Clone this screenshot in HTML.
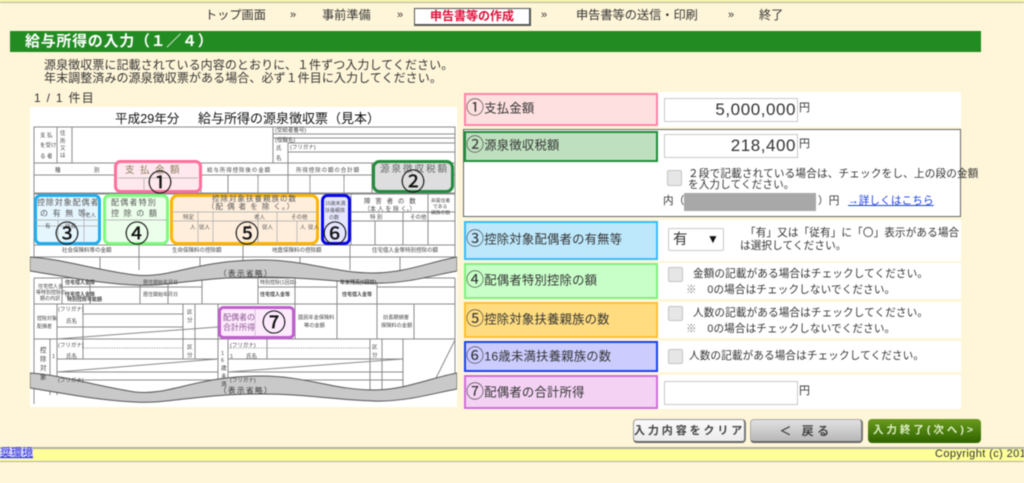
<!DOCTYPE html>
<html lang="ja"><head><meta charset="utf-8"><title>給与所得の入力</title>
<style>
html,body{margin:0;padding:0;width:1024px;height:483px;overflow:hidden;background:#FFF6D9}
#p{position:absolute;left:0;top:0;width:1024px;height:483px;overflow:hidden;filter:blur(.55px);font-family:"Liberation Sans","Noto Sans CJK JP",sans-serif;color:#333}
.a{position:absolute;white-space:nowrap;line-height:1}
.l{position:absolute;left:464px;width:194px;box-sizing:border-box;border:2px solid;}
.w{position:absolute;background:#fff}
.n{position:absolute;left:466px;font-size:12.3px;letter-spacing:.25px;white-space:nowrap;line-height:20px;height:20px}
.n b{font-weight:400;font-size:18px;vertical-align:-1.5px;margin-right:0}
.i{position:absolute;box-sizing:border-box;background:#fff;border:1px solid #c8c8c8;text-align:right;font-size:17px;letter-spacing:.55px;line-height:22px;padding-right:1px;color:#333}
.c{position:absolute;width:15px;height:15px;box-sizing:border-box;background:#e6e6e6;border:1px solid #c4c4c4;border-radius:2px}
.s{font-size:10.6px;letter-spacing:.12px}
.b{position:absolute;top:419px;height:24px;box-sizing:border-box;border-radius:4px;text-align:center;font-size:11px;font-weight:700;line-height:22px;white-space:nowrap}
svg text{font-family:"Liberation Sans","Noto Sans CJK JP",sans-serif}
</style></head><body><div id="p">
<div style="position:absolute;left:0;top:0;width:1024px;height:2px;background:#F4F0A8"></div>
<div style="position:absolute;left:0;top:2px;width:1024px;height:1px;background:#b5b5a5"></div>

<div class="a" style="left:205px;top:9px;font-size:12.2px">トップ画面</div>
<div class="a" style="left:290px;top:10px;font-size:11px">»</div>
<div class="a" style="left:322px;top:9px;font-size:12.2px">事前準備</div>
<div class="a" style="left:397px;top:10px;font-size:11px">»</div>
<div class="a" style="left:414px;top:8px;width:117px;height:18px;box-sizing:border-box;background:#fff;border:1px solid #555;border-width:1px 2px 2px 1px;color:#e0103a;font-size:12px;font-weight:700;text-align:center;line-height:15px">申告書等の作成</div>
<div class="a" style="left:541px;top:10px;font-size:11px">»</div>
<div class="a" style="left:576px;top:9px;font-size:12.2px">申告書等の送信・印刷</div>
<div class="a" style="left:728px;top:10px;font-size:11px">»</div>
<div class="a" style="left:759px;top:9px;font-size:12.2px">終了</div>

<div style="position:absolute;left:10px;top:31px;width:971px;height:21px;background:#228B22"></div>
<div class="a" style="left:25px;top:34px;font-size:15px;font-weight:700;color:#fff;letter-spacing:.7px">給与所得の入力（１／４）</div>

<div class="a" style="left:44px;top:59px;font-size:12px;letter-spacing:.08px">源泉徴収票に記載されている内容のとおりに、１件ずつ入力してください。</div>
<div class="a" style="left:44px;top:72px;font-size:12px;letter-spacing:.08px">年末調整済みの源泉徴収票がある場合、必ず１件目に入力してください。</div>
<div class="a" style="left:34px;top:92px;font-size:12px;letter-spacing:1.300px">1 / 1 件目</div>

<svg style="position:absolute;left:30px;top:107px" width="427" height="300" viewBox="30 107 427 300">
<rect x="30" y="107" width="427" height="300" fill="#fff"/>
<text x="115" y="123" font-size="12.6" fill="#111">平成29年分</text>
<text x="198" y="123" font-size="13" fill="#111">給与所得の源泉徴収票（見本）</text>
<g fill="none" stroke="#8a8a8a" stroke-width="1">
<rect x="34" y="127" width="421" height="36"/>
<path d="M57 127V163M72 127V163M273 127V163M288 143V163M273 134H455M273 138H455M288 143H455M288 152H455"/>
<path d="M34 175H455M34 193H455M34 163V257M455 163V257M201 163V193M228 175V193M258 175V193M288 163V193M310 175V193M344 175V193M372 163V193"/>
<path d="M34 194H455M34 245H455M34 257H455M351 194V245M375 221V245M403 212V245M428 194V245M351 212H455M351 221H455"/>
<path d="M139 245V257M243 245V257M350 245V257M139 257V270M243 257V270M350 257V270M100 257V270M200 257V270M300 257V270M400 257V270"/>
<path d="M34 278H455M62 287H202M258 287H337M377 287H455M34 304H455M34 339H455M34 278V404M455 278V385"/>
<path d="M62 278V304M90 278V304M140 278V304M168 278V304M202 278V304M258 278V304M295 278V304M337 278V304M377 278V304"/>
<path d="M57 304V395M83 304V339M183 304V339M195 304V339M218 304V395M295 304V339M337 304V339M377 304V339M414 304V339"/>
<path d="M57 327H183M57 339L218 327M83 314H183"/>
<path d="M50 339V395M83 339V359M183 339V359M195 339V359M57 359H218M57 372L218 359M57 372H218M57 380H218"/>
<path d="M228 339V395M267 339V359M370 339V395M382 339V395M403 339V400M228 359H403M228 372L403 359M228 372H403M228 380H403M435 380L455 340"/>
</g>
<path d="M84 348H183M228 348H370" stroke="#aaa" stroke-width="1" stroke-dasharray="1.5 1"/>
<path d="M30 257C62 259 95 270 135 275C170 279 195 260 262 260C305 260 335 273 373 273C405 273 430 262 457 257V271C430 276 405 284 373 283C335 282 305 277 262 277C195 277 170 287 135 285C95 283 62 276 30 271Z" fill="#c9c9c9" stroke="#555" stroke-width="1"/>
<path d="M30 373C62 375 95 386 135 392C170 396 195 376 262 376C305 376 335 390 373 390C405 390 430 378 457 373V389C430 394 405 402 373 401C335 400 305 394 262 394C195 394 170 404 135 402C95 400 62 393 30 388Z" fill="#c9c9c9" stroke="#555" stroke-width="1"/>
<text x="219" y="276" font-size="7.5" fill="#333" letter-spacing="1.500">（表示省略）</text>
<text x="219" y="393" font-size="7.5" fill="#333" letter-spacing="1.500">（表示省略）</text>
<g font-size="5.5" fill="#444">
<text x="40" y="137">支 払</text><text x="40" y="147">を受け</text><text x="40" y="158">る 者</text>
<text x="60" y="135">住</text><text x="60" y="143">所</text><text x="60" y="150">又</text><text x="60" y="157">は</text>
<text x="275" y="132">(受給者番号)</text><text x="275" y="142">(役職名)</text><text x="290" y="149">(フリガナ)</text>
<text x="276" y="150">氏</text><text x="276" y="160">名</text>
<text x="55" y="172">種</text><text x="94" y="172">別</text>
<text x="207" y="172" letter-spacing=".9">給与所得控除後の金額</text>
<text x="296" y="172" letter-spacing=".9">所得控除の額の合計額</text>
<text x="62" y="252">社会保険料等の金額</text><text x="172" y="252">生命保険料の控除額</text><text x="272" y="252">地震保険料の控除額</text><text x="372" y="252">住宅借入金等特別控除の額</text>
<text x="364" y="203" font-size="6.5" letter-spacing="1.5">障 害 者 の 数</text>
<text x="364" y="211" font-size="6">（本 人 を 除 く。）</text>
<text x="431" y="202" font-size="4.8">非居住者</text><text x="433" y="208" font-size="4.8">である</text><text x="431" y="214" font-size="4.8">親族の数</text>
<text x="370" y="219">特 別</text><text x="410" y="219">その他</text>
<text x="38" y="288" font-size="5">住宅借入金</text><text x="36" y="294" font-size="5">等特別控除の</text><text x="40" y="300" font-size="5">額の内訳</text>
<text x="65" y="284" font-size="5" font-weight="700">住宅借入金等</text><text x="65" y="296" font-size="5" font-weight="700">住宅借入金等</text><text x="67" y="301" font-size="5" font-weight="700">特別控除可能額</text>
<text x="143" y="284" font-size="5">居住開始年月日</text><text x="143" y="296" font-size="5">居住開始年月日</text>
<text x="260" y="284" font-size="5">特別控除(1回目)</text><text x="260" y="296" font-size="5" font-weight="700">住宅借入金等</text>
<text x="340" y="284" font-size="5" font-weight="700">年末残高(1回目)</text><text x="342" y="296" font-size="5" font-weight="700">住宅借入金等</text>
<text x="37" y="320" font-size="5">控除対象</text><text x="37" y="328" font-size="5">配偶者</text>
<text x="58" y="311">(フリガナ)</text><text x="66" y="323">氏名</text>
<text x="187" y="314">区</text><text x="187" y="322">分</text>
<text x="58" y="347">(フリガナ)</text><text x="66" y="358">氏名</text>
<text x="187" y="349">区</text><text x="187" y="357">分</text>
<text x="230" y="347">(フリガナ)</text><text x="246" y="358">氏名</text>
<text x="372" y="349">区</text><text x="372" y="357">分</text>
<text x="58" y="382">(フリガナ)</text><text x="230" y="382">(フリガナ)</text>
<text x="298" y="319" font-size="5.2">国民年金保険料</text><text x="304" y="327" font-size="5.2">等の金額</text>
<text x="383" y="319" font-size="5.2">旧長期損害</text><text x="381" y="327" font-size="5.2">保険料の金額</text>
<text x="40" y="352" font-size="6.5">控</text><text x="40" y="361" font-size="6.5">除</text><text x="40" y="370" font-size="6.5">対</text><text x="40" y="379" font-size="6.5">象</text>
<text x="221" y="355" font-size="5.5">1</text><text x="221" y="362" font-size="5.5">6</text><text x="221" y="370" font-size="5.5">歳</text><text x="221" y="378" font-size="5.5">未</text><text x="221" y="386" font-size="5.5">満</text>
<text x="52" y="358">1</text><text x="230" y="358">1</text>
</g>
<g stroke-width="3">
<rect x="115.500" y="161.500" width="85" height="30" rx="5" fill="#FFE8EE" stroke="#FF6F9C"/>
<rect x="373.500" y="161.500" width="79" height="30" rx="6" fill="#DEDEDE" stroke="#228B3C"/>
<rect x="35.500" y="195.500" width="64" height="48" rx="5" fill="#E6F6FF" stroke="#1EAEF0"/>
<rect x="104.500" y="195.500" width="63" height="48" rx="5" fill="#EBFFEB" stroke="#7DFB7D"/>
<rect x="171.500" y="195.500" width="146" height="48" rx="6" fill="#FFEEDC" stroke="#FFB400"/>
<rect x="322.500" y="195.500" width="27" height="48" rx="5" fill="#E6E6FF" stroke="#0808E8"/>
<rect x="219.500" y="307.500" width="74" height="30" rx="4" fill="#FDEBFD" stroke="#C060D0"/>
</g>
<g fill="none" stroke="#a9a9a9" stroke-width=".7">
<path d="M144 178V191M118 178H198M35 220H99M58 220V243M84 208V243M36 226H99"/>
<path d="M105 220H167M172 212H318M172 221H318M198 212V243M213 212V243M258 212V243M277 212V243M297 221V243"/>
<path d="M258 178V191M310 178V191M344 178V191"/>
</g>
<g fill="#8a8060" font-size="9.500" letter-spacing="5.500"><text x="125" y="173">支払金額</text></g>
<text x="380" y="172" font-size="9.500" fill="#666" letter-spacing="2">源泉徴収税額</text>
<g font-size="8" fill="#555"><text x="37" y="205" letter-spacing=".9">控除対象配偶者</text><text x="40" y="216" letter-spacing="1.200">の 有 無 等</text>
<text x="111" y="205" letter-spacing="1.200">配偶者特別</text><text x="111" y="216" letter-spacing="1.200">控 除 の 額</text></g>
<text x="212" y="201" font-size="7.500" fill="#555" letter-spacing="1">控除対象扶養親族の数</text>
<text x="207" y="209" font-size="7.500" fill="#555" letter-spacing="1">（配 偶 者 を 除 く。）</text>
<g font-size="5.500" fill="#555"><text x="85" y="217">老人</text><text x="45" y="228">有</text><text x="65" y="228">従有</text><text x="183" y="219">特定</text><text x="254" y="219">老人</text><text x="291" y="219">その他</text>
<text x="190" y="229">人</text><text x="199" y="229">従人</text><text x="247" y="229">人</text><text x="262" y="229">従人</text><text x="300" y="229">人</text><text x="308" y="229">従人</text></g>
<g font-size="5.500" fill="#555"><text x="325" y="205" font-size="5">16歳未満</text><text x="325" y="212" font-size="5">扶養親族</text><text x="329" y="219" font-size="5">の数</text></g>
<text x="223" y="320" font-size="8" fill="#8a5090">配偶者の</text><text x="223" y="330" font-size="8" fill="#8a5090">合計所得</text>
<path d="M255 308V337" stroke="#c9a9d0" stroke-width=".7"/>
<g font-size="24" fill="#111" stroke="#111" stroke-width=".35" text-anchor="middle">
<text x="160" y="191">①</text><text x="413" y="190">②</text><text x="67" y="242">③</text><text x="137" y="242">④</text><text x="247" y="242">⑤</text><text x="335" y="242">⑥</text><text x="274" y="331">⑦</text>
</g>
</svg>

<!-- rows -->
<div class="w" style="left:658px;top:92px;width:303px;height:35px"></div>
<div class="l" style="top:93px;height:33px;background:#FFE0E0;border-color:#FF85A8"></div>
<div class="n" style="top:98px"><b>①</b>支払金額</div>
<div class="i" style="left:664px;top:98px;width:134px;height:24px">5,000,000</div>
<div class="a" style="left:799px;top:103px;font-size:11px">円</div>

<div style="position:absolute;left:463px;top:129px;width:498px;height:88px;box-sizing:border-box;background:#fff;border:1px solid #666"></div>
<div class="l" style="top:131px;height:31px;background:#BFE0BF;border-color:#228B3C"></div>
<div class="n" style="top:135px"><b>②</b>源泉徴収税額</div>
<div class="i" style="left:664px;top:134px;width:134px;height:24px">218,400</div>
<div class="a" style="left:799px;top:139px;font-size:11px">円</div>
<div class="c" style="left:667px;top:170px;width:15px;height:16px"></div>
<div class="a s" style="left:688px;top:169px;letter-spacing:.18px">２段で記載されている場合は、チェックをし、上の段の金額</div>
<div class="a s" style="left:688px;top:180px">を入力してください。</div>
<div class="a s" style="left:663px;top:196px">内（</div>
<div style="position:absolute;left:684px;top:193px;width:132px;height:18px;background:#A8A8A8"></div>
<div class="a s" style="left:818px;top:196px">）円</div>
<div class="a s" style="left:848px;top:196px;color:#1a3fd8;text-decoration:underline">→詳しくはこちら</div>

<div class="w" style="left:658px;top:220px;width:303px;height:41px"></div>
<div class="l" style="top:221px;height:39px;background:#BDE8FC;border-color:#38BDF8"></div>
<div class="n" style="top:229px"><b>③</b>控除対象配偶者の有無等</div>
<div style="position:absolute;left:668px;top:228px;width:56px;height:23px;box-sizing:border-box;background:#fff;border:1px solid #c8c8c8;border-radius:2px;font-size:14.5px;line-height:22px;padding-left:4px">有<span style="position:absolute;left:38px;top:-1px;font-size:12px;color:#111">▼</span></div>
<div class="a s" style="left:745px;top:228px">「有」又は「従有」に「〇」表示がある場合</div>
<div class="a s" style="left:740px;top:241px">は選択してください。</div>

<div class="w" style="left:658px;top:263px;width:303px;height:36px"></div>
<div class="l" style="top:263px;height:36px;background:#C8FFC8;border-color:#80F080"></div>
<div class="n" style="top:270px"><b>④</b>配偶者特別控除の額</div>
<div class="c" style="left:668px;top:267px"></div>
<div class="a s" style="left:693px;top:269px">金額の記載がある場合はチェックしてください。</div>
<div class="a s" style="left:686px;top:285px"><span style="color:#888">※</span>　0の場合はチェックしないでください。</div>

<div class="w" style="left:658px;top:302px;width:303px;height:36px"></div>
<div class="l" style="top:302px;height:36px;background:#FFDC80;border-color:#FFC030"></div>
<div class="n" style="top:309px"><b>⑤</b>控除対象扶養親族の数</div>
<div class="c" style="left:668px;top:306px"></div>
<div class="a s" style="left:693px;top:308px">人数の記載がある場合はチェックしてください。</div>
<div class="a s" style="left:686px;top:324px"><span style="color:#888">※</span>　0の場合はチェックしないでください。</div>

<div class="w" style="left:658px;top:341px;width:303px;height:31px"></div>
<div class="l" style="top:341px;height:31px;background:#CCCCFF;border-color:#2040F0"></div>
<div class="n" style="top:346px"><b>⑥</b>16歳未満扶養親族の数</div>
<div class="c" style="left:668px;top:349px"></div>
<div class="a s" style="left:689px;top:351px">人数の記載がある場合はチェックしてください。</div>

<div class="w" style="left:658px;top:375px;width:303px;height:34px"></div>
<div class="l" style="top:375px;height:34px;background:#F3D2F3;border-color:#D070D8"></div>
<div class="n" style="top:382px"><b>⑦</b>配偶者の合計所得</div>
<div class="i" style="left:664px;top:381px;width:134px;height:24px;border-width:1.500px"></div>
<div class="a" style="left:799px;top:386px;font-size:11px">円</div>

<!-- buttons -->
<div class="b" style="left:633px;width:113px;background:linear-gradient(#fafafa,#ececec);border:1px solid #999;border-bottom:2px solid #666;border-right:2px solid #777;letter-spacing:2.900px;color:#444">入力内容をクリア</div>
<div class="b" style="left:750px;width:113px;background:linear-gradient(#e2e2e2,#b8b8b8);border:1px solid #aaa;border-bottom:2px solid #666;border-right:2px solid #777;letter-spacing:3.500px;color:#444;font-size:12px">＜ 戻る</div>
<div class="b" style="left:868px;width:113px;background:linear-gradient(#6a9a1e,#2f6200);letter-spacing:3px;color:#dff0c8;font-size:10.500px">入力終了(次へ)&gt;</div>

<!-- footer -->
<div style="position:absolute;left:0;top:447px;width:1024px;height:15px;box-sizing:border-box;background:#FFFF99;border-top:2px solid #b0b0a0;border-bottom:1px solid #b0b0a0"></div>
<div class="a" style="left:0;top:448px;font-size:11px;color:#2a2ad8;text-decoration:underline;background:#d8d8f8">奨環境</div>
<div class="a" style="left:935px;top:449px;font-size:11px;letter-spacing:.4px;color:#333">Copyright (c) 2018</div>
</div></body></html>
